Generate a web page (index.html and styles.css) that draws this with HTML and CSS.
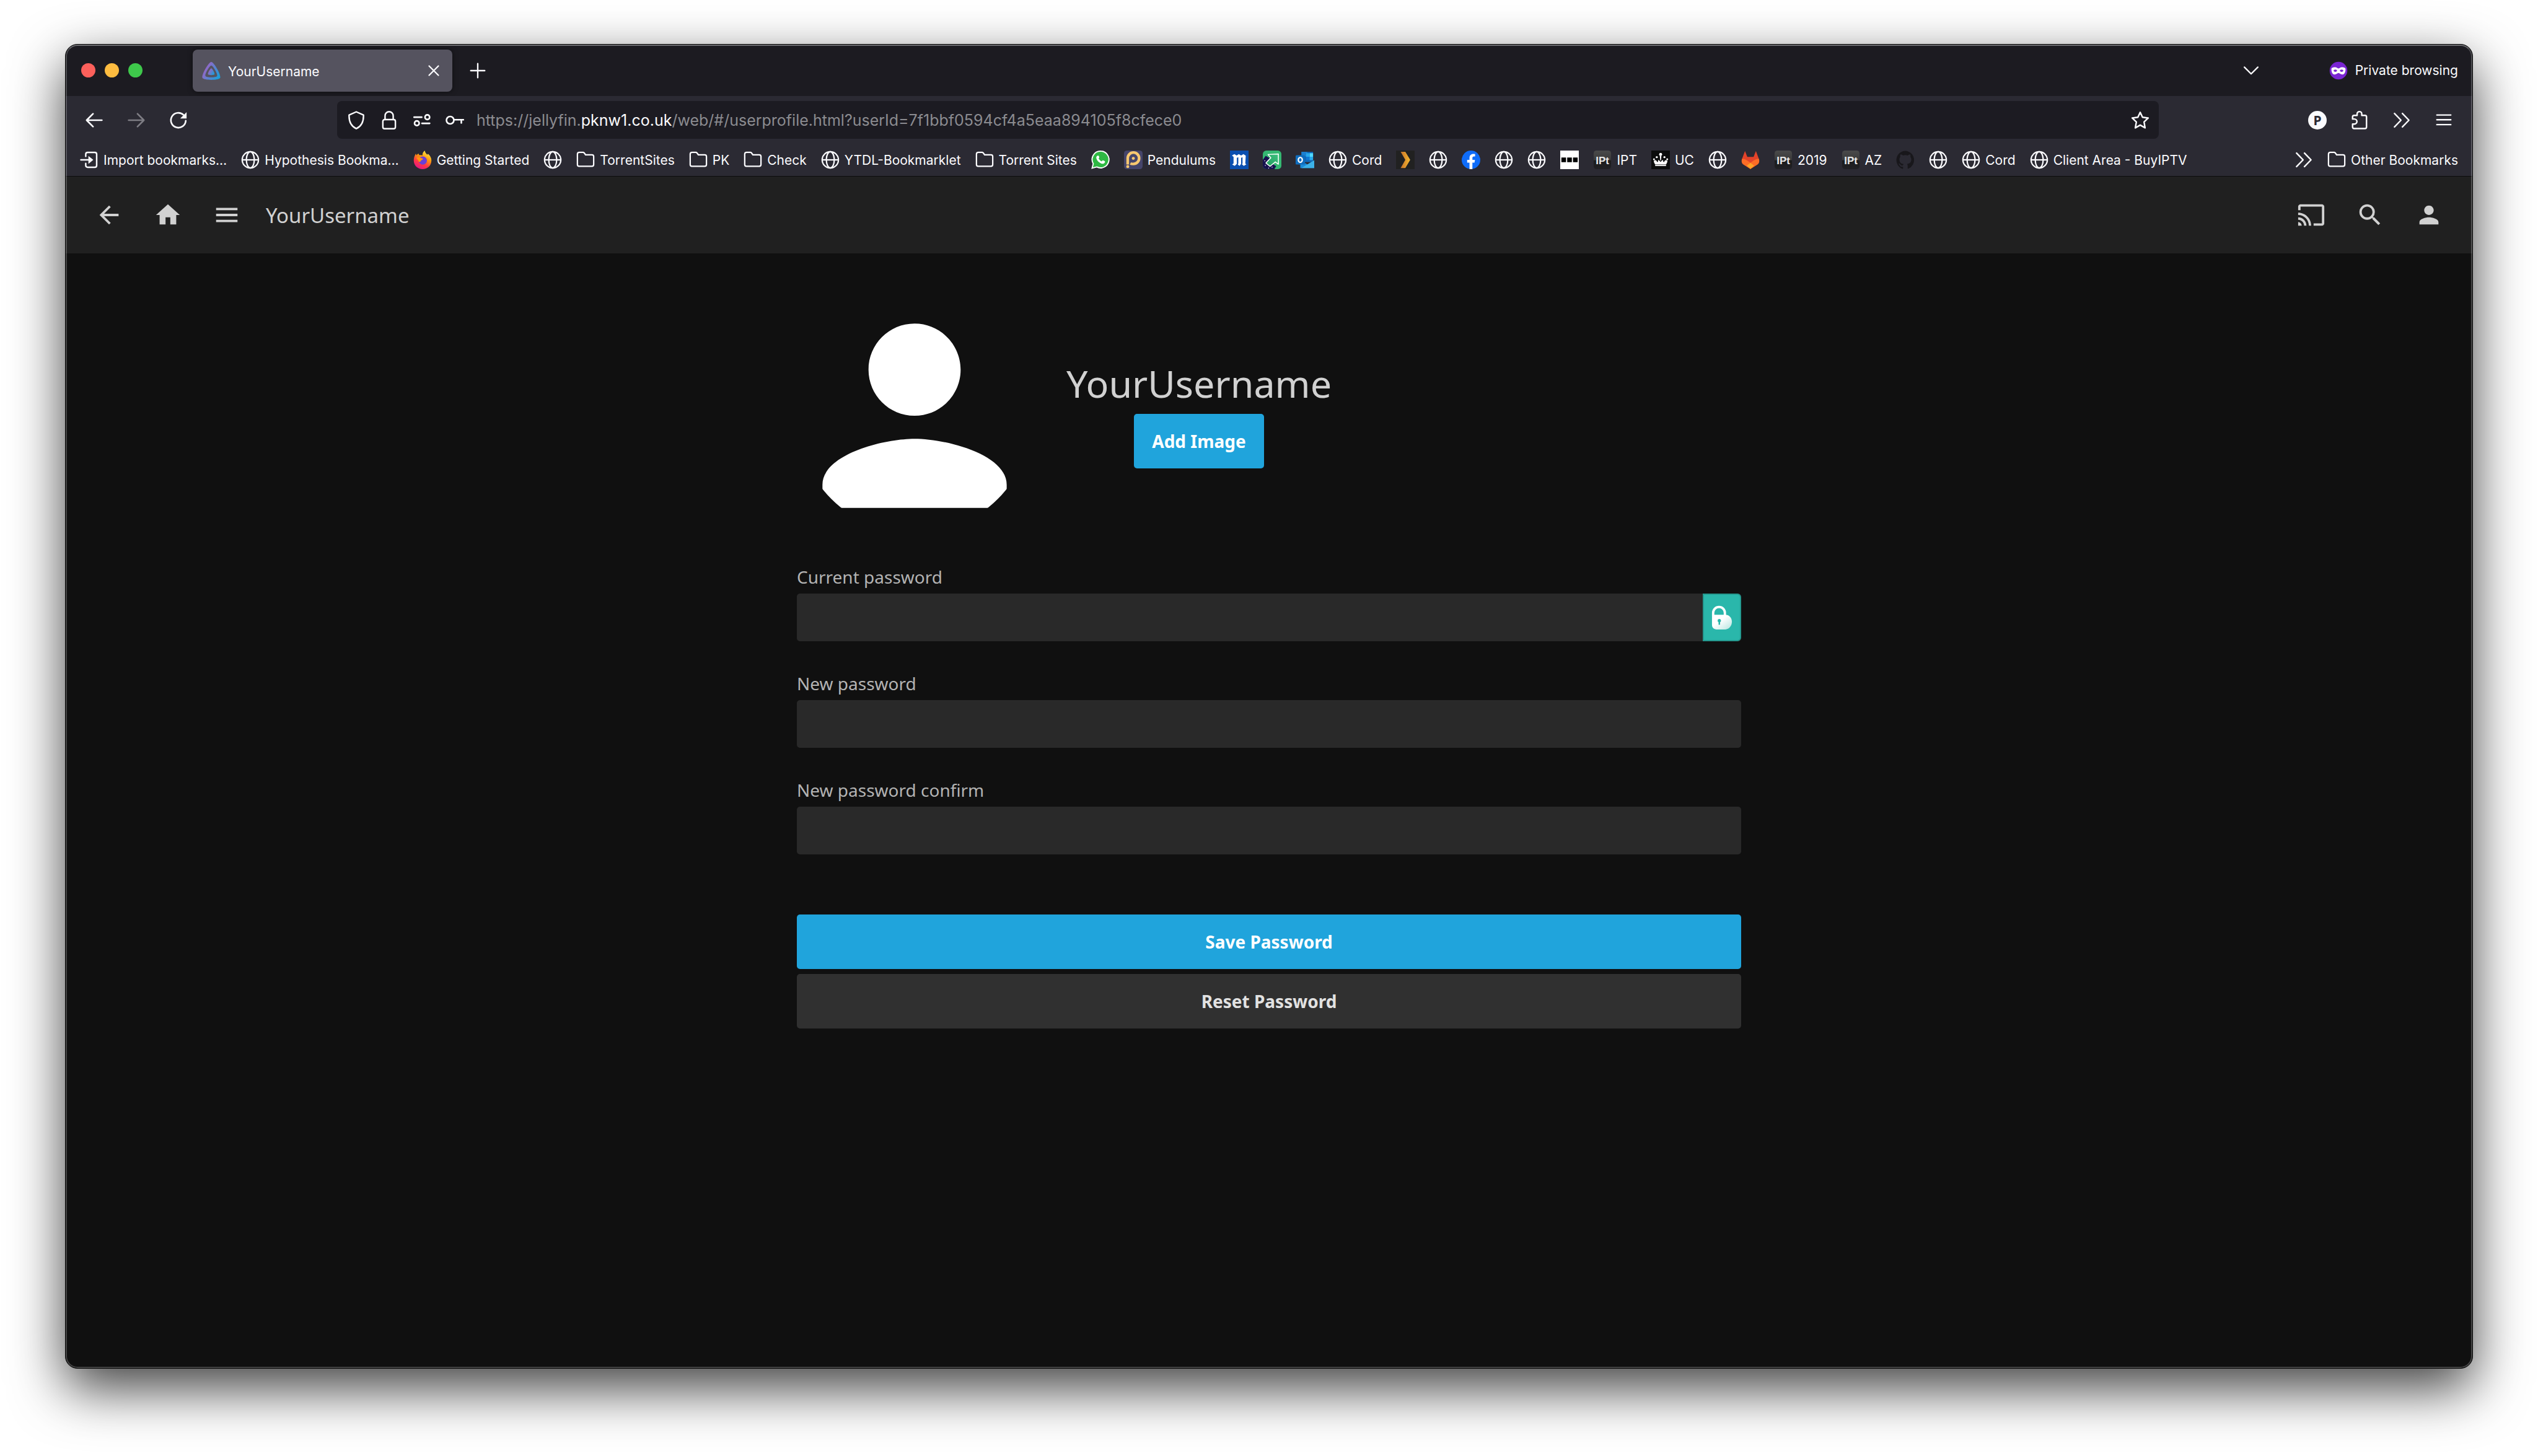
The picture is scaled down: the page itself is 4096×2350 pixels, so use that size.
FILE: index.html
```html
<!DOCTYPE html>
<html lang="en">
<head>
<meta charset="utf-8">
<title>YourUsername</title>
<link rel="stylesheet" href="styles.css">
</head>
<body>
<svg class="sprite" aria-hidden="true">
  <defs>
    <linearGradient id="jelly" x1="0" y1="0.3" x2="1" y2="0.9"><stop offset="0" stop-color="#aa5cc3"/><stop offset="1" stop-color="#10a4dc"/></linearGradient>
    <linearGradient id="fire" x1="0.8" y1="0" x2="0.3" y2="1"><stop offset="0" stop-color="#fff44f"/><stop offset="0.4" stop-color="#ff980e"/><stop offset="0.7" stop-color="#ff3647"/><stop offset="1" stop-color="#e31587"/></linearGradient>
    <linearGradient id="ipt" x1="0" y1="0" x2="0" y2="1"><stop offset="0" stop-color="#4a4a4a"/><stop offset="0.5" stop-color="#3a3a3a"/><stop offset="0.55" stop-color="#1c1c1c"/><stop offset="1" stop-color="#202024"/></linearGradient>
    <linearGradient id="plex" x1="0" y1="0" x2="1" y2="0"><stop offset="0" stop-color="#c8742a"/><stop offset="1" stop-color="#f5b82e"/></linearGradient>
    <linearGradient id="lockfill" x1="0" y1="0" x2="1" y2="1"><stop offset="0.4" stop-color="#fff"/><stop offset="1" stop-color="#b4e4df"/></linearGradient>
    <linearGradient id="leaf" x1="0" y1="1" x2="1" y2="0"><stop offset="0" stop-color="#1f9a5c"/><stop offset="1" stop-color="#3fc380"/></linearGradient>
  </defs>
  <symbol id="globe" viewBox="0 0 16 16"><g fill="none" stroke="#fbfbfe" stroke-width="1.2"><circle cx="8" cy="8" r="7"/><ellipse cx="8" cy="8" rx="3.4" ry="7"/><path d="M1 8h14"/></g></symbol>
  <symbol id="folder" viewBox="0 0 16 16"><path d="M2.6 1.5h3.2c.4 0 .8.2 1 .5l1.2 1.6h5.5c.9 0 1.5.6 1.5 1.5v6.9c0 .9-.6 1.500-1.5 1.500h-11c-.9 0-1.500-.6-1.500-1.500V3c0-.9.6-1.500 1.600-1.500z" fill="none" stroke="#fbfbfe" stroke-width="1.2"/></symbol>
  <symbol id="more" viewBox="0 0 16 16"><path d="M1.8 2.2 7.4 8l-5.6 5.8M8.6 2.2 14.2 8l-5.6 5.8" fill="none" stroke="#fbfbfe" stroke-width="1.3" stroke-linecap="round" stroke-linejoin="round"/></symbol>
</svg>

<div class="window">
  <header class="tabbar">
    <div class="lights"><span class="light red"></span><span class="light amber"></span><span class="light green"></span></div>
    <div class="tab">
      <svg class="icon" viewBox="0 0 16 16"><path fill="url(#jelly)" fill-rule="evenodd" d="M8 .5C5.600.5-.8 12.200.4 14.300c1.100 2.200 14.100 2.200 15.200 0C16.800 12.100 10.400.5 8 .5zM13 12.600c-.8 1.500-9.200 1.500-10 0S6.500 3.600 8 3.600 13.800 11.100 13 12.600z"/><path fill="url(#jelly)" d="M8 6c-.9 0-3.300 4.400-2.800 5.200.4.800 5.200.8 5.600 0S8.900 6 8 6z"/></svg>
      <span class="tab-title">YourUsername</span>
      <button class="plain" aria-label="Close tab"><svg class="icon" viewBox="0 0 16 16"><path d="M4 4l8 8M12 4l-8 8" stroke="#fbfbfe" stroke-width="1.2" stroke-linecap="round"/></svg></button>
    </div>
    <button class="plain new-tab" aria-label="New tab"><svg class="icon" viewBox="0 0 16 16"><path d="M8 2v12M2 8h12" stroke="#fbfbfe" stroke-width="1.25" stroke-linecap="round"/></svg></button>
    <button class="plain all-tabs" aria-label="List all tabs"><svg class="icon" viewBox="0 0 16 16"><path d="M2.200 5 8 10.800 13.800 5" fill="none" stroke="#fbfbfe" stroke-width="1.25" stroke-linecap="round" stroke-linejoin="round"/></svg></button>
    <div class="private">
      <svg class="icon" viewBox="0 0 16 16"><circle cx="8" cy="8" r="7.600" fill="#7a25d3"/><path fill="#fff" fill-rule="evenodd" d="M1.900 6.600c0-1.500 3.500-2.100 5.100-.9.700.5 1.300.5 2 0 1.600-1.200 5.100-.6 5.100.9 0 2.500-.8 4.500-2.600 4.700-1.700.2-2.400-1.300-3.500-1.300s-1.800 1.500-3.500 1.300c-1.800-.2-2.600-2.200-2.600-4.700zM5.300 7c-.8 0-1.500.5-1.500 1s.7 1 1.500 1 1.500-.5 1.500-1-.7-1-1.500-1zm5.400 0c-.8 0-1.500.5-1.500 1s.7 1 1.500 1 1.500-.5 1.500-1-.7-1-1.500-1z"/></svg>
      <span>Private browsing</span>
    </div>
  </header>

  <div class="toolbar">
    <nav class="navbar" aria-label="Navigation">
      <button class="tool" aria-label="Back"><svg class="icon" viewBox="0 0 16 16"><path d="M14.600 8H1.800M7 2.500 1.500 8 7 13.500" fill="none" stroke="#fbfbfe" stroke-width="1.400" stroke-linecap="round" stroke-linejoin="round"/></svg></button>
      <button class="tool" aria-label="Forward" disabled><svg class="icon" viewBox="0 0 16 16"><path d="M1.400 8h12.800M9 2.500 14.500 8 9 13.500" fill="none" stroke="#7e7d84" stroke-width="1.400" stroke-linecap="round" stroke-linejoin="round"/></svg></button>
      <button class="tool" aria-label="Reload"><svg class="icon" viewBox="0 0 16 16"><path d="M14.300 8.400A6.400 6.400 0 1 1 12.300 3.400" fill="none" stroke="#fbfbfe" stroke-width="1.400" stroke-linecap="round"/><path d="M15 1v5.500H9.500z" fill="#fbfbfe"/></svg></button>
      <div class="urlbar">
        <button class="chip" aria-label="Tracking protection"><svg class="icon" viewBox="0 0 16 16"><path d="M8 .8 14.200 3.500C14.400 8.500 12.800 13 8 15.300 3.200 13 1.600 8.500 1.800 3.500z" fill="none" stroke="#fbfbfe" stroke-width="1.300" stroke-linejoin="round"/></svg></button>
        <button class="chip" aria-label="Connection secure"><svg class="icon" viewBox="0 0 16 16"><path d="M4.500 7.500V4.200a3.500 3.500 0 0 1 7 0v3.300" fill="none" stroke="#fbfbfe" stroke-width="1.300"/><rect x="2.600" y="7.500" width="10.800" height="7.800" rx="1.500" fill="none" stroke="#fbfbfe" stroke-width="1.300"/></svg></button>
        <button class="chip" aria-label="Permissions"><svg class="icon" viewBox="0 0 16 16"><g fill="none" stroke="#fbfbfe" stroke-width="1.400" stroke-linecap="round"><circle cx="12.600" cy="5.400" r="2"/><circle cx="3.600" cy="10.600" r="2"/><path d="M1.200 5.400h6.600M8 10.700h6.600"/></g></svg></button>
        <button class="chip" aria-label="Saved logins"><svg class="icon" viewBox="0 0 16 16"><g fill="none" stroke="#fbfbfe" stroke-width="1.400" stroke-linecap="round"><circle cx="4" cy="8" r="3.200"/><path d="M7.400 7.600h8M13.600 7.800v2.600"/></g></svg></button>
        <div class="url">https://jellyfin.<span class="domain">pknw1.co.uk</span>/web/#/userprofile.html?userId=7f1bbf0594cf4a5eaa894105f8cfece0</div>
        <button class="chip" aria-label="Bookmark this page"><svg class="icon" viewBox="0 0 16 16"><path d="M8 1.200 10 5.500 14.900 6.100 11.300 9.500 12.200 14.600 8 12.200 3.800 14.600 4.700 9.500 1.100 6.100 6 5.500z" fill="none" stroke="#fbfbfe" stroke-width="1.300" stroke-linejoin="round"/></svg></button>
      </div>
      <button class="tool" aria-label="Account"><span class="account">P</span></button>
      <button class="tool" aria-label="Extensions"><svg class="icon" viewBox="0 0 16 16"><path d="M2 6.300V5.200c0-.8.600-1.300 1.300-1.300h2.600V2.600a2 2 0 0 1 4 0v1.300h2.800c.8 0 1.300.6 1.300 1.300v8.700c0 .8-.6 1.300-1.300 1.300H3.300c-.8 0-1.300-.5-1.300-1.300v-2.600h1.600a2 2 0 0 0 0-4.300H2z" fill="none" stroke="#fbfbfe" stroke-width="1.300" stroke-linejoin="round"/></svg></button>
      <button class="tool" aria-label="More tools"><svg class="icon"><use href="#more"/></svg></button>
      <button class="tool" aria-label="Open menu"><svg class="icon" viewBox="0 0 16 16"><path d="M2 3.500h12M2 7.600h12M2 11.800h12" stroke="#fbfbfe" stroke-width="1.250" stroke-linecap="round"/></svg></button>
    </nav>

    <div class="bookmarks">
      <a class="mark" href="#"><svg class="icon" viewBox="0 0 16 16"><path d="M5 5V3.200c0-1 .6-1.600 1.600-1.600h6.200c1 0 1.600.6 1.600 1.600v9.600c0 1-.6 1.600-1.600 1.600H6.600c-1 0-1.600-.6-1.600-1.600V11M.8 8H9" fill="none" stroke="#fbfbfe" stroke-width="1.300" stroke-linecap="round"/><path d="M7.300 4.600 11.500 8l-4.200 3.400z" fill="#fbfbfe"/></svg>Import bookmarks…</a>
      <a class="mark" href="#"><svg class="icon"><use href="#globe"/></svg>Hypothesis Bookma…</a>
      <a class="mark" href="#"><svg class="icon" viewBox="0 0 16 16"><path fill="url(#fire)" d="M9.900 0c.2 1.800 1.300 2.600 2.100 3.600l.6-.8c1.600 1.300 3 3.200 3 5.700C15.600 13 12 16 8 16S.4 13 .4 8.500C.4 6.500 1 4.500 2.200 2.600l.6 1.500C3.500 3.200 4 2.900 4.600 2.700l.4 1.200C6 4 7 3.900 7.900 4.100 7.800 2.300 8.600 1 9.900 0z"/><circle cx="8.200" cy="8.600" r="3.500" fill="#6a3fd8"/><path fill="#ff980e" d="M2.800 6.300c1.400-.9 3-.4 4 .2 1 .1 1.500.3 1.500.8-.3.700-1.300.8-1.700 1.300-.3 1-1 1.300-1.900 1C4.700 8.500 3.500 7.500 2.800 6.300z"/></svg>Getting Started</a>
      <a class="mark" href="#" aria-label="Bookmark"><svg class="icon"><use href="#globe"/></svg></a>
      <a class="mark" href="#"><svg class="icon"><use href="#folder"/></svg>TorrentSites</a>
      <a class="mark" href="#"><svg class="icon"><use href="#folder"/></svg>PK</a>
      <a class="mark" href="#"><svg class="icon"><use href="#folder"/></svg>Check</a>
      <a class="mark" href="#"><svg class="icon"><use href="#globe"/></svg>YTDL-Bookmarklet</a>
      <a class="mark" href="#"><svg class="icon"><use href="#folder"/></svg>Torrent Sites</a>
      <a class="mark" href="#" aria-label="WhatsApp"><svg class="icon" viewBox="0 0 16 16"><path d="M8.200.5a7.200 7.200 0 1 1-3.400 13.600L.8 15.200l1-3.900A7.200 7.200 0 0 1 8.200.5z" fill="#2eb843" stroke="#fff" stroke-width="1"/><path d="M5.300 4.500c.7-.6 1.200-.2 1.500.7.300.8.100 1.100-.4 1.600.6 1.200 1.500 2 2.700 2.500.5-.6.800-1 1.300-.8 1.500.6 1.700.9 1.400 1.600-.5 1.200-1.800 1.600-3.300 1C6.600 10.300 5 8.500 4.500 6.800c-.3-1 .1-1.800.8-2.300z" fill="#fff"/></svg></a>
      <a class="mark" href="#"><svg class="icon" viewBox="0 0 16 16"><rect width="16" height="16" rx="2.500" fill="#45456b"/><path d="M3.200 12V6.600a4.900 4.900 0 1 1 4.900 4.900c-1 0-1.800 0-2.600-.4" fill="none" stroke="#f8c870" stroke-width="2.300"/><circle cx="8" cy="6.700" r="1.300" fill="#f8c870"/><circle cx="3.200" cy="13.800" r="1.300" fill="#f8c870"/></svg>Pendulums</a>
      <a class="mark" href="#" aria-label="Newspaper"><svg class="icon" viewBox="0 0 16 16"><path d="M0 0h16v16H0z" fill="#0a4fb0"/><path d="M1.700 4.200 3.800 3l2 1.300L7.600 3l2 1.300L11.600 3l2 1.400-.4 6.800.9.700-2.200 1.300-1.600-1.300.5-.8V5.700l-1.200.6v5.200L8.300 13.200 6.700 12l.5-.9V5.700l-1.300.6v5.100L4.100 13.200 1.900 12l1.200-1V5.500z" fill="#fff"/></svg></a>
      <a class="mark" href="#" aria-label="Leaf arrow"><svg class="icon" viewBox="0 0 16 16"><rect width="16" height="16" rx="3" fill="#35b872"/><path d="M2.500 4.500 6 6.500l1 4 4.500 3L10 16H3a3 3 0 0 1-3-3V8z" fill="#17124f"/><path d="M4.500 3.400 13.400 2.900v8.900l-2.600-2L6.200 13.600 2.700 10.700 6.900 6.200z" fill="url(#leaf)" stroke="#fff" stroke-width=".8" stroke-linejoin="round"/><g fill="#fff"><circle cx="2.200" cy="12.800" r=".4"/><circle cx="5" cy="15" r=".4"/><circle cx="8" cy="14.300" r=".4"/><circle cx="1.700" cy="8.800" r=".4"/></g></svg></a>
      <a class="mark" href="#" aria-label="Outlook"><svg class="icon" viewBox="0 0 16 16"><path d="M5 1h10v9H5z" fill="#1066b5"/><path d="M5 1h5v4H5z" fill="#1b7fd0"/><path d="M12 2.300h3v3h-3z" fill="#50d9ff"/><path d="M9 2.300h3v3H9z" fill="#28a8ea"/><path d="M9 5.300h3v3H9z" fill="#0f78d4"/><path d="M12 5.300h3v3h-3z" fill="#28a8ea"/><path d="M4 8.500 16 15H4z" fill="#1a8ad8"/><path d="M16 8.200V15H5z" fill="#3cb1e8"/><rect y="4" width="8" height="8" rx=".8" fill="#0f6cbd"/><ellipse cx="4" cy="8" rx="1.700" ry="2.100" fill="none" stroke="#fff" stroke-width="1.200"/></svg></a>
      <a class="mark" href="#"><svg class="icon"><use href="#globe"/></svg>Cord</a>
      <a class="mark" href="#" aria-label="Plex"><svg class="icon" viewBox="0 0 16 16"><path d="M0 0h16v16H0z" fill="#212121"/><path d="M4 1h4l4.200 7L8 15H4l4-7z" fill="url(#plex)"/></svg></a>
      <a class="mark" href="#" aria-label="Bookmark"><svg class="icon"><use href="#globe"/></svg></a>
      <a class="mark" href="#" aria-label="Facebook"><svg class="icon" viewBox="0 0 16 16"><circle cx="8" cy="8" r="8" fill="#0f6cf8"/><path d="M6.700 16v-5.600H4.700V8h2V6.400c0-2.300 1.300-3.500 3.300-3.500.7 0 1.500.1 1.500.1v2h-1c-1 0-1.300.6-1.300 1.300V8h2.200l-.4 2.400H9.200V16z" fill="#fff"/></svg></a>
      <a class="mark" href="#" aria-label="Bookmark"><svg class="icon"><use href="#globe"/></svg></a>
      <a class="mark" href="#" aria-label="Bookmark"><svg class="icon"><use href="#globe"/></svg></a>
      <a class="mark" href="#" aria-label="Three squares"><svg class="icon" viewBox="0 0 16 16"><path d="M0 0h16v16H0z" fill="#fff"/><path d="M1 6h4v4H1zM6 6h4v4H6zM11 6h4v4h-4z" fill="#000"/></svg></a>
      <a class="mark" href="#"><svg class="icon" viewBox="0 0 16 16"><rect x="0.5" width="15" height="16" rx="2.500" fill="url(#ipt)"/><text class="ipt" x="8" y="11.600">IPt</text></svg>IPT</a>
      <a class="mark" href="#"><svg class="icon" viewBox="0 0 16 16"><path d="M0 0h16v16H0z" fill="#0b0c0c"/><g fill="#fff"><path d="M2.300 8.500c1.500-.8 2.500.2 2.700 1.500.8-.2 1-1 .8-2 .8.300 1.500.8 2.200 1.800.7-1 1.400-1.500 2.200-1.800-.2 1 0 1.800.8 2 .2-1.300 1.200-2.300 2.700-1.500.4 1-.3 2.300-1 3.500H3.300c-.7-1.200-1.400-2.500-1-3.500zM3.300 12.400h9.400v.9H3.300z"/><path d="M7.300 4.500h1.400l-.4 4h-.6z"/><circle cx="8" cy="3.300" r="1.300"/><circle cx="4.700" cy="5.700" r=".9"/><circle cx="11.300" cy="5.700" r=".9"/><circle cx="2.300" cy="7.500" r=".8"/><circle cx="13.700" cy="7.500" r=".8"/></g></svg>UC</a>
      <a class="mark" href="#" aria-label="Bookmark"><svg class="icon"><use href="#globe"/></svg></a>
      <a class="mark" href="#" aria-label="GitLab"><svg class="icon" viewBox="0 0 16 16"><path d="M3.300.4 5.300 5.500h5.400L12.700.4l2.500 6.600c.8 2.300.2 4-1.200 5L8 15.800 2 12C.6 11 0 9.300.8 7z" fill="#e2432a"/><path d="M.8 7C3 7 5.500 8.500 8 10.500 10.500 8.500 13 7 15.200 7c.8 2.300.2 4-1.200 5L8 15.800 2 12C.6 11 0 9.300.8 7z" fill="#fc6d26"/><path d="M8 10.500 11.200 13 8 15.700 4.800 13z" fill="#fca326"/></svg></a>
      <a class="mark" href="#"><svg class="icon" viewBox="0 0 16 16"><rect x="0.5" width="15" height="16" rx="2.500" fill="url(#ipt)"/><text class="ipt" x="8" y="11.600">IPt</text></svg>2019</a>
      <a class="mark" href="#"><svg class="icon" viewBox="0 0 16 16"><rect x="0.5" width="15" height="16" rx="2.500" fill="url(#ipt)"/><text class="ipt" x="8" y="11.600">IPt</text></svg>AZ</a>
      <a class="mark" href="#" aria-label="GitHub"><svg class="icon" viewBox="0 0 16 16"><path fill="#18171b" d="M8 .2a8 8 0 0 0-2.500 15.500c.4.100.5-.2.500-.4v-1.400c-2.200.5-2.700-1-2.700-1-.4-.9-.9-1.200-.9-1.200-.7-.5.1-.5.100-.5.800.1 1.200.8 1.200.8.7 1.200 1.900.9 2.300.7.100-.5.300-.9.500-1.100-1.800-.2-3.600-.9-3.600-4 0-.9.300-1.600.8-2.100-.1-.2-.4-1 .1-2.100 0 0 .7-.2 2.200.8a7.500 7.500 0 0 1 4 0c1.500-1 2.200-.8 2.200-.8.400 1.100.2 1.900.1 2.100.5.600.8 1.300.8 2.100 0 3.100-1.900 3.700-3.700 3.900.3.300.6.800.6 1.500v2.200c0 .2.100.5.500.4A8 8 0 0 0 8 .2z"/></svg></a>
      <a class="mark" href="#" aria-label="Bookmark"><svg class="icon"><use href="#globe"/></svg></a>
      <a class="mark" href="#"><svg class="icon"><use href="#globe"/></svg>Cord</a>
      <a class="mark" href="#"><svg class="icon"><use href="#globe"/></svg>Client Area - BuyIPTV</a>
      <button class="plain overflow" aria-label="More bookmarks"><svg class="icon"><use href="#more"/></svg></button>
      <a class="mark" href="#"><svg class="icon"><use href="#folder"/></svg>Other Bookmarks</a>
    </div>
  </div>

  <div class="appbar">
    <button class="app-btn" aria-label="Back"><svg viewBox="0 0 24 24"><path d="M20 11H7.830l5.590-5.590L12 4l-8 8 8 8 1.410-1.410L7.830 13H20v-2z"/></svg></button>
    <button class="app-btn" aria-label="Home"><svg viewBox="0 0 24 24"><path d="M10 20v-6h4v6h5v-8h3L12 3 2 12h3v8z"/></svg></button>
    <button class="app-btn" aria-label="Menu"><svg viewBox="0 0 24 24"><path d="M3 18h18v-2H3v2zm0-5h18v-2H3v2zm0-7v2h18V6H3z"/></svg></button>
    <span class="app-title">YourUsername</span>
    <button class="app-btn" aria-label="Cast"><svg viewBox="0 0 24 24"><path d="M21 3H3c-1.100 0-2 .9-2 2v3h2V5h18v14h-7v2h7c1.100 0 2-.9 2-2V5c0-1.100-.9-2-2-2zM1 18v3h3c0-1.660-1.340-3-3-3zm0-4v2c2.760 0 5 2.240 5 5h2c0-3.870-3.130-7-7-7zm0-4v2c4.970 0 9 4.030 9 9h2c0-6.080-4.930-11-11-11z"/></svg></button>
    <button class="app-btn" aria-label="Search"><svg viewBox="0 0 24 24"><path d="M15.500 14h-.79l-.28-.27A6.471 6.471 0 0 0 16 9.500 6.500 6.500 0 1 0 9.500 16c1.610 0 3.090-.59 4.230-1.570l.27.28v.79l5 4.990L20.490 19l-4.990-5zm-6 0C7.010 14 5 11.990 5 9.500S7.010 5 9.500 5 14 7.010 14 9.500 11.990 14 9.500 14z"/></svg></button>
    <button class="app-btn" aria-label="User"><svg viewBox="0 0 24 24"><path d="M12 12c2.210 0 4-1.790 4-4s-1.790-4-4-4-4 1.790-4 4 1.790 4 4 4zm0 2c-2.670 0-8 1.340-8 4v2h16v-2c0-2.660-5.330-4-8-4z"/></svg></button>
  </div>

  <main class="page">
    <section class="profile">
      <div class="avatar"><svg viewBox="0 0 24 24"><path d="M12 12c2.210 0 4-1.790 4-4s-1.790-4-4-4-4 1.790-4 4 1.790 4 4 4zm0 2c-2.670 0-8 1.340-8 4v2h16v-2c0-2.660-5.330-4-8-4z"/></svg></div>
      <div class="details">
        <h1 class="name">YourUsername</h1>
        <button class="btn primary compact">Add Image</button>
      </div>
    </section>
    <form class="passwords">
      <div class="field">
        <label for="current">Current password</label>
        <div class="box">
          <input id="current" type="password">
          <button type="button" class="vault" aria-label="Fill password"><svg viewBox="0 0 36 42"><path d="M3 18v-5.500a10 10 0 0 1 20 0V18" fill="none" stroke="#fff" stroke-width="4"/><path d="M1 16h23c6 0 11 5 11 12s-5 13-11 13H9c-5 0-8-3-8-8z" fill="url(#lockfill)"/><circle cx="13.500" cy="26" r="2.800" fill="#2ab7ab"/><path d="M12.200 26h2.600v7h-2.600z" fill="#2ab7ab"/></svg></button>
        </div>
      </div>
      <div class="field">
        <label for="new">New password</label>
        <div class="box"><input id="new" type="password"></div>
      </div>
      <div class="field">
        <label for="confirm">New password confirm</label>
        <div class="box"><input id="confirm" type="password"></div>
      </div>
      <div class="actions">
        <button type="button" class="btn primary">Save Password</button>
        <button type="button" class="btn">Reset Password</button>
      </div>
    </form>
  </main>
</div>
</body>
</html>
```

FILE: styles.css
```css
* {
  box-sizing: border-box;
}

body {
  display: flex;
  min-height: 100vh;
  margin: 0;
  padding: 71px 105px 141px;
  background: #fff;
  font-family: Inter, "Liberation Sans", sans-serif;
  font-size: 21px;
  color: #fbfbfe;
}

button {
  margin: 0;
  padding: 0;
  border: 0;
  background: none;
  color: inherit;
  font: inherit;
}

.sprite {
  position: absolute;
  width: 0;
  height: 0;
}

.icon {
  display: block;
  flex: none;
  width: 30px;
  height: 30px;
}

.ipt {
  fill: #e8e8e8;
  font-family: "Liberation Sans", sans-serif;
  font-size: 9px;
  font-weight: 700;
  text-anchor: middle;
}

/* Browser window */
.window {
  position: relative;
  flex: 1;
  min-width: 0;
  display: flex;
  flex-direction: column;
  overflow: hidden;
  border: 1px solid #000;
  border-radius: 20px;
  background: #101010;
  box-shadow: 0 32px 86px rgba(0, 0, 0, 0.75);
}

.window::after {
  content: "";
  position: absolute;
  inset: 0;
  border: 2px solid rgba(255, 255, 255, 0.22);
  border-top-color: rgba(255, 255, 255, 0.36);
  border-radius: 19px;
  pointer-events: none;
}

/* Tab strip */
.tabbar {
  display: flex;
  align-items: center;
  height: 83px;
  padding: 0 23px 0 25px;
  background: #1c1b21;
}

.lights {
  display: flex;
  gap: 15px;
  margin-right: 81px;
}

.light {
  width: 23px;
  height: 23px;
  border-radius: 50%;
}

.red { background: #fc605b; }
.amber { background: #fdbc40; }
.green { background: #3ec84b; }

.tab {
  display: flex;
  align-items: center;
  gap: 12px;
  width: 419px;
  height: 68px;
  padding: 0 15px;
  border-radius: 8px;
  background: #55535f;
  box-shadow: 0 0 8px rgba(0, 0, 0, 0.5);
}

.tab-title {
  flex: 1;
  padding-top: 4px;
}

.plain {
  display: flex;
  align-items: center;
  justify-content: center;
}

.new-tab {
  width: 60px;
  margin-left: 11px;
}

.all-tabs {
  margin-left: auto;
  margin-right: 111px;
}

.private {
  display: flex;
  align-items: center;
  gap: 12px;
}

/* Navigation and bookmarks */
.toolbar {
  background: #2b2a33;
  border-bottom: 1px solid #0c0c0d;
}

.navbar {
  display: flex;
  align-items: center;
  height: 77px;
  padding: 0 12px;
}

.tool {
  display: flex;
  justify-content: center;
  width: 68px;
}

.account {
  width: 30px;
  border-radius: 50%;
  background: #fbfbfe;
  color: #2b2a33;
  font-family: "Noto Sans", sans-serif;
  font-weight: 700;
  line-height: 30px;
  text-align: center;
}

.urlbar {
  display: flex;
  align-items: center;
  flex: 1;
  height: 61px;
  margin: 0 222px;
  padding: 0 4px;
  border-radius: 8px;
  background: #1c1b22;
}

.chip {
  display: flex;
  justify-content: center;
  width: 53px;
}

.url {
  flex: 1;
  margin-left: 9px;
  color: #8b8b90;
  font-size: 25px;
  white-space: nowrap;
}

.domain {
  color: #fbfbfe;
}

.bookmarks {
  display: flex;
  align-items: center;
  gap: 23px;
  height: 52px;
  padding: 0 23px;
}

.mark {
  display: flex;
  align-items: center;
  gap: 8px;
  color: inherit;
  text-decoration: none;
  white-space: nowrap;
}

.overflow {
  margin-left: auto;
}

/* App header */
.appbar {
  display: flex;
  align-items: center;
  height: 124px;
  padding: 0 23px 0 22px;
  background: #202020;
  color: #d1d1d1;
  font-family: "Noto Sans", sans-serif;
}

.app-btn {
  display: flex;
  justify-content: center;
  width: 95px;
}

.app-btn svg {
  width: 46px;
  height: 46px;
  fill: currentColor;
}

.app-title {
  flex: 1;
  margin-left: 16px;
  font-size: 33px;
}

/* Profile page */
.page {
  width: 100%;
  max-width: 1524px;
  margin: 0 auto;
  padding: 72px 0;
  font-family: "Noto Sans", sans-serif;
  font-size: 28px;
}

.profile {
  display: flex;
  align-items: center;
  gap: 55px;
}

.avatar {
  display: flex;
  align-items: center;
  justify-content: center;
  width: 380px;
  height: 380px;
  overflow: hidden;
  border-radius: 50%;
}

.avatar svg {
  flex: none;
  width: 446px;
  height: 446px;
  fill: #fff;
}

.details {
  display: flex;
  flex-direction: column;
  align-items: center;
}

.name {
  margin: 0 0 16px;
  color: #d1d1d1;
  font-size: 61px;
  font-weight: 400;
  line-height: 66px;
}

.btn {
  height: 88px;
  border-radius: 5px;
  background: #303030;
  color: #e2e2e2;
  font-weight: 700;
}

.primary {
  background: #20a4dc;
  color: #fff;
}

.compact {
  padding: 0 29px;
}

.passwords {
  display: flex;
  flex-direction: column;
  gap: 49px;
  margin-top: 51px;
}

.field {
  display: flex;
  flex-direction: column;
  gap: 8px;
}

.field label {
  color: #b3b3b3;
  line-height: 38px;
}

.box {
  position: relative;
  display: flex;
}

.box input {
  flex: 1;
  height: 77px;
  padding: 0 16px;
  border: 0;
  border-radius: 5px;
  background: #292929;
  color: #fff;
  font: inherit;
}

.vault {
  position: absolute;
  top: 0;
  right: 0;
  bottom: 0;
  display: flex;
  align-items: center;
  justify-content: center;
  width: 62px;
  border: 2px solid #24998f;
  border-radius: 0 6px 6px 0;
  background: #2ab7ab;
}

.vault svg {
  width: 34px;
  height: 40px;
}

.actions {
  display: flex;
  flex-direction: column;
  gap: 8px;
  margin-top: 48px;
}
```
